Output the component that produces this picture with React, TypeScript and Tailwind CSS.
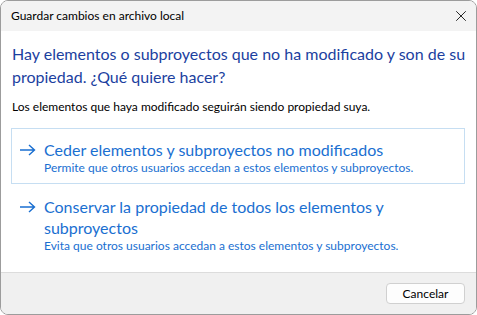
import { X } from "lucide-react";

const Arrow = () => (
  <svg width="17" height="12" viewBox="0 0 17 12" fill="none" className="shrink-0">
    <path d="M1 6h14.5M10 1l5.5 5-5.5 5" stroke="#1a6fd1" strokeWidth="1.4" />
  </svg>
);

const CommandLink = ({
  title,
  desc,
  active,
}: {
  title: string;
  desc: string;
  active?: boolean;
}) => (
  <div
    className={
      "flex gap-[8px] pl-[7px] pr-2 pt-[10px] pb-[7px] border " +
      (active ? "border-[#c6def2]" : "border-transparent")
    }
  >
    <div className="pt-[5px]">
      <Arrow />
    </div>
    <div className="flex flex-col">
      <span className="text-[16px] leading-[21px] text-[#1a6fd1]">{title}</span>
      <span className="text-[12px] leading-[16px] text-[#1a6fd1]">{desc}</span>
    </div>
  </div>
);

export default function App() {
  return (
    <div
      className="w-[477px] h-[315px] flex flex-col rounded-lg border border-[#9c9c9c] overflow-hidden bg-white"
      style={{ fontFamily: '"Segoe UI", Lato, sans-serif' }}
    >
      <div className="h-[30px] shrink-0 flex items-center justify-between bg-[#f3f3f3] pl-[10px] pr-[6px]">
        <span className="text-[12px] text-black">Guardar cambios en archivo local</span>
        <X size={18} strokeWidth={1.3} color="#222" />
      </div>
      <div className="flex-1 flex flex-col pl-[10px] pr-[11px] pt-[11px]">
        <p className="pl-[1px] text-[16px] leading-[23px] text-[#1c3f9f]">
          <span className="whitespace-nowrap">
            Hay elementos o subproyectos que no ha modificado y son de su
          </span>
          <br />
          propiedad. ¿Qué quiere hacer?
        </p>
        <p className="pl-[1px] text-[12px] leading-[16px] text-black mt-[11px]">
          Los elementos que haya modificado seguirán siendo propiedad suya.
        </p>
        <div className="mt-[13px] flex flex-col gap-[1px]">
          <CommandLink
            active
            title="Ceder elementos y subproyectos no modificados"
            desc="Permite que otros usuarios accedan a estos elementos y subproyectos."
          />
          <CommandLink
            title="Conservar la propiedad de todos los elementos y subproyectos"
            desc="Evita que otros usuarios accedan a estos elementos y subproyectos."
          />
        </div>
      </div>
      <div className="h-[42px] shrink-0 flex items-center justify-end bg-[#f0f0f0] border-t border-[#dcdcdc] pr-[11px]">
        <button className="w-[79px] h-[21px] rounded-[4px] border border-[#d0d0d0] bg-[#fdfdfd] text-[12px] text-black leading-none">
          Cancelar
        </button>
      </div>
    </div>
  );
}
